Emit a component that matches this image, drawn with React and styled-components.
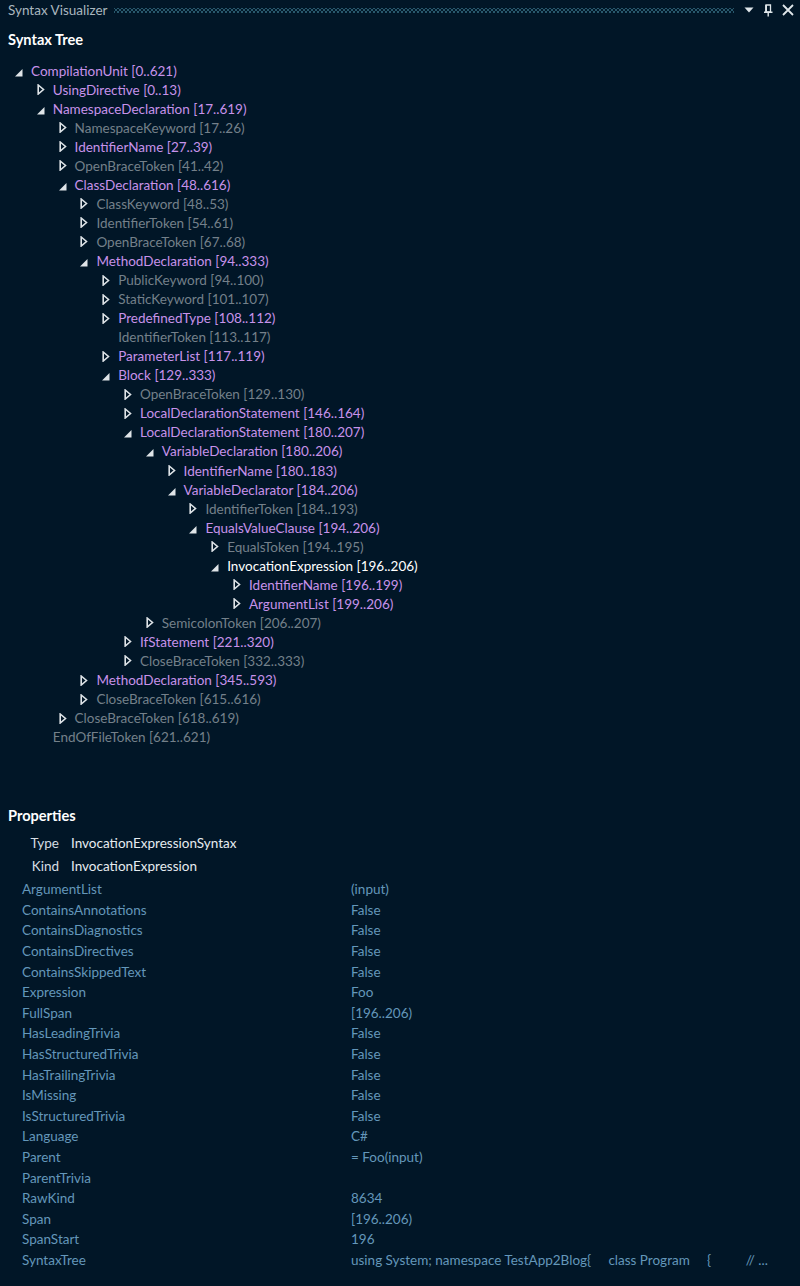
import React from "react";
import styled, { createGlobalStyle } from "styled-components";

const Global = createGlobalStyle`
  html, body { margin: 0; padding: 0; background: #011627; }
  body { font-family: "Lato", "Liberation Sans", sans-serif; }
`;

const Page = styled.div`
  width: 800px;
  min-height: 1286px;
  background: #011627;
  display: flex;
  flex-direction: column;
  font-family: "Lato", "Liberation Sans", sans-serif;
  font-size: 13.5px;
  & > * { flex: none; }
`;

const TitleBar = styled.div`
  height: 20px;
  display: flex;
  align-items: center;
  padding: 0 6px 0 8px;
  gap: 6px;
`;

const TitleText = styled.div`
  color: #aab6bf;
  font-size: 13.5px;
`;

const Grip = styled.div`
  flex: 1;
  height: 5px;
  margin-top: 1px;
  background-image:
    radial-gradient(circle, #28586c 0.9px, transparent 1.1px),
    radial-gradient(circle, #28586c 0.9px, transparent 1.1px);
  background-size: 4px 4px;
  background-position: 0 0, 2px 2px;
`;

const TitleButtons = styled.div`
  display: flex;
  align-items: center;
  gap: 9px;
  margin-left: 4px;
`;

const SectionTitle = styled.div`
  height: 20px;
  line-height: 20px;
  padding-left: 8px;
  color: #ffffff;
  font-weight: 700;
  font-size: 14.6px;
  margin-top: ${(p) => p.$top}px;
`;

const Tree = styled.div`
  padding-top: 11px;
  height: 701px;
  display: flex;
  flex-direction: column;
`;

const Row = styled.div`
  height: 19.06px;
  flex: none;
  display: flex;
  align-items: center;
  padding-left: ${(p) => 15 + p.$level * 21.8}px;
  white-space: nowrap;
`;

const IconBox = styled.div`
  width: 16px;
  flex: none;
  display: flex;
  align-items: center;
  height: 19px;
`;

const Label = styled.span`
  color: ${(p) =>
    p.$kind === "node" ? "#c792ea" : p.$kind === "selected" ? "#ffffff" : "#74808a"};
`;

const Summary = styled.div`
  display: grid;
  grid-template-columns: 59px auto;
  column-gap: 12px;
  grid-auto-rows: 23px;
  align-items: center;
  margin-top: 5.5px;
`;

const SummaryKey = styled.div`
  text-align: right;
  color: #d6dde3;
`;

const SummaryValue = styled.div`
  color: #e6ecf0;
`;

const PropGrid = styled.div`
  display: grid;
  grid-template-columns: 329px 1fr;
  grid-auto-rows: 20.6px;
  align-items: center;
  padding-left: 22px;
  margin-top: 1.5px;
  color: #6497ba;
  white-space: nowrap;
`;

const PropName = styled.div``;
const PropValue = styled.div`
  overflow: hidden;
`;

const Expanded = () => (
  <svg width="8" height="8" viewBox="0 0 8 8" style={{ marginTop: 4 }}>
    <polygon points="7.5,0 7.5,7.5 0,7.5" fill="#dfe4e8" />
  </svg>
);

const Collapsed = () => (
  <svg width="8" height="11" viewBox="0 0 8 11">
    <polygon points="1.2,1 6.5,5.5 1.2,10" fill="none" stroke="#dfe4e8" strokeWidth="1.6" strokeLinejoin="miter" />
  </svg>
);

const rows = [
  [0, "e", "node", "CompilationUnit [0..621)"],
  [1, "c", "node", "UsingDirective [0..13)"],
  [1, "e", "node", "NamespaceDeclaration [17..619)"],
  [2, "c", "token", "NamespaceKeyword [17..26)"],
  [2, "c", "node", "IdentifierName [27..39)"],
  [2, "c", "token", "OpenBraceToken [41..42)"],
  [2, "e", "node", "ClassDeclaration [48..616)"],
  [3, "c", "token", "ClassKeyword [48..53)"],
  [3, "c", "token", "IdentifierToken [54..61)"],
  [3, "c", "token", "OpenBraceToken [67..68)"],
  [3, "e", "node", "MethodDeclaration [94..333)"],
  [4, "c", "token", "PublicKeyword [94..100)"],
  [4, "c", "token", "StaticKeyword [101..107)"],
  [4, "c", "node", "PredefinedType [108..112)"],
  [4, "l", "token", "IdentifierToken [113..117)"],
  [4, "c", "node", "ParameterList [117..119)"],
  [4, "e", "node", "Block [129..333)"],
  [5, "c", "token", "OpenBraceToken [129..130)"],
  [5, "c", "node", "LocalDeclarationStatement [146..164)"],
  [5, "e", "node", "LocalDeclarationStatement [180..207)"],
  [6, "e", "node", "VariableDeclaration [180..206)"],
  [7, "c", "node", "IdentifierName [180..183)"],
  [7, "e", "node", "VariableDeclarator [184..206)"],
  [8, "c", "token", "IdentifierToken [184..193)"],
  [8, "e", "node", "EqualsValueClause [194..206)"],
  [9, "c", "token", "EqualsToken [194..195)"],
  [9, "e", "selected", "InvocationExpression [196..206)"],
  [10, "c", "node", "IdentifierName [196..199)"],
  [10, "c", "node", "ArgumentList [199..206)"],
  [6, "c", "token", "SemicolonToken [206..207)"],
  [5, "c", "node", "IfStatement [221..320)"],
  [5, "c", "token", "CloseBraceToken [332..333)"],
  [3, "c", "node", "MethodDeclaration [345..593)"],
  [3, "c", "token", "CloseBraceToken [615..616)"],
  [2, "c", "token", "CloseBraceToken [618..619)"],
  [1, "l", "token", "EndOfFileToken [621..621)"],
];

const sp = (n) => "\u00a0".repeat(n);

const props = [
  ["ArgumentList", "(input)"],
  ["ContainsAnnotations", "False"],
  ["ContainsDiagnostics", "False"],
  ["ContainsDirectives", "False"],
  ["ContainsSkippedText", "False"],
  ["Expression", "Foo"],
  ["FullSpan", "[196..206)"],
  ["HasLeadingTrivia", "False"],
  ["HasStructuredTrivia", "False"],
  ["HasTrailingTrivia", "False"],
  ["IsMissing", "False"],
  ["IsStructuredTrivia", "False"],
  ["Language", "C#"],
  ["Parent", "= Foo(input)"],
  ["ParentTrivia", ""],
  ["RawKind", "8634"],
  ["Span", "[196..206)"],
  ["SpanStart", "196"],
  ["SyntaxTree", `using System; namespace TestApp2Blog{${sp(5)}class Program${sp(5)}{${sp(10)}// ...`],
];

export default function App() {
  return (
    <Page>
      <Global />
      <TitleBar>
        <TitleText>Syntax Visualizer</TitleText>
        <Grip />
        <TitleButtons>
          <svg width="10" height="6" viewBox="0 0 10 6">
            <polygon points="0.5,0.5 9.5,0.5 5,5.5" fill="#dfe6ea" />
          </svg>
          <svg width="10" height="13" viewBox="0 0 10 13">
            <path d="M3 1 H7.5 V8 H3 Z M3 1 V8" fill="none" stroke="#dfe6ea" strokeWidth="1.3" />
            <rect x="2.2" y="1" width="1.8" height="7" fill="#dfe6ea" />
            <path d="M1 8.3 H9.5 M5.2 8.3 V12.5" stroke="#dfe6ea" strokeWidth="1.4" />
          </svg>
          <svg width="12" height="12" viewBox="0 0 12 12">
            <path d="M1 1 L11 11 M11 1 L1 11" stroke="#dfe6ea" strokeWidth="1.8" />
          </svg>
        </TitleButtons>
      </TitleBar>

      <SectionTitle $top={10}>Syntax Tree</SectionTitle>
      <Tree>
        {rows.map(([level, state, kind, text], i) => (
          <Row key={i} $level={level}>
            <IconBox>
              {state === "e" ? <Expanded /> : state === "c" ? <Collapsed /> : null}
            </IconBox>
            <Label $kind={kind}>{text}</Label>
          </Row>
        ))}
      </Tree>

      <SectionTitle $top={44}>Properties</SectionTitle>
      <Summary>
        <SummaryKey>Type</SummaryKey>
        <SummaryValue>InvocationExpressionSyntax</SummaryValue>
        <SummaryKey>Kind</SummaryKey>
        <SummaryValue>InvocationExpression</SummaryValue>
      </Summary>
      <PropGrid>
        {props.map(([k, v]) => (
          <React.Fragment key={k}>
            <PropName>{k}</PropName>
            <PropValue>{v}</PropValue>
          </React.Fragment>
        ))}
      </PropGrid>
    </Page>
  );
}
